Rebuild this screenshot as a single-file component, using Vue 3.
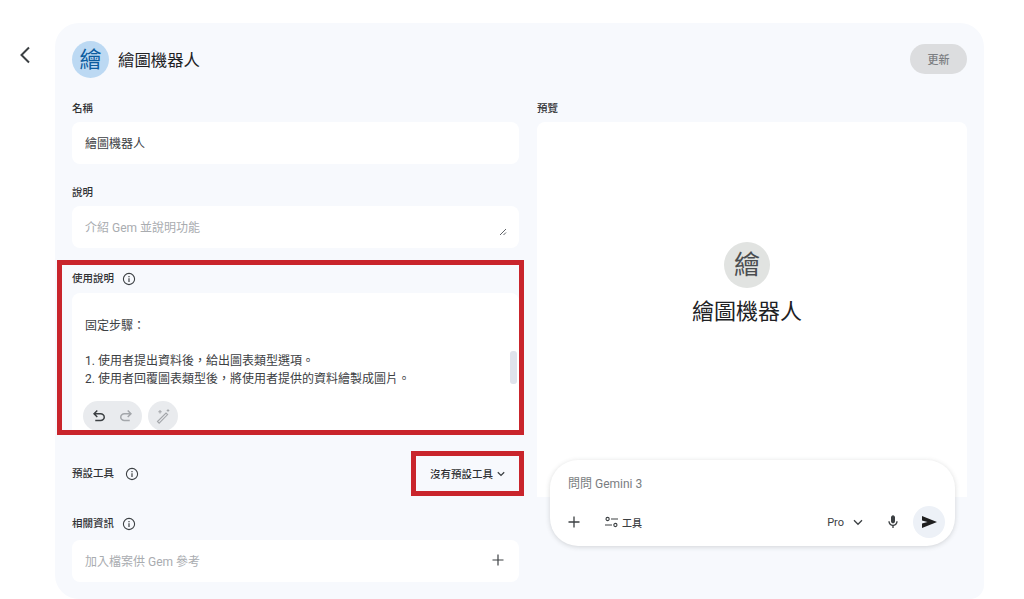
<script setup>
const steps = [
  '1. 使用者提出資料後，給出圖表類型選項。',
  '2. 使用者回覆圖表類型後，將使用者提供的資料繪製成圖片。',
]
</script>

<template>
  <div class="page">
    <div class="back-col">
      <svg class="back" width="12" height="18" viewBox="0 0 12 18" fill="none">
        <path d="M10 1.5 2.5 9l7.5 7.5" stroke="#3c4043" stroke-width="2" />
      </svg>
    </div>
    <main class="panel">
      <header class="head">
        <div class="avatar">繪</div>
        <h1 class="title">繪圖機器人</h1>
        <button class="update">更新</button>
      </header>
      <div class="cols">
        <section class="left">
          <label class="label">名稱</label>
          <div class="input">繪圖機器人</div>

          <label class="label gap">說明</label>
          <div class="input muted">
            介紹 Gem 並說明功能
            <svg class="resize" width="8" height="8" viewBox="0 0 8 8" fill="none">
              <path d="M1 7 7 1M4.5 7 7 4.5" stroke="#5f6368" stroke-width="1" />
            </svg>
          </div>

          <div class="marked">
            <div class="label-row">
              <span class="label">使用說明</span>
              <svg class="info" width="14" height="14" viewBox="0 0 14 14" fill="none">
                <circle cx="7" cy="7" r="5.6" stroke="#3c4043" stroke-width="1.1" />
                <path d="M7 6.3v3.6M7 4v1.2" stroke="#3c4043" stroke-width="1.2" />
              </svg>
            </div>
            <div class="editor">
              <p class="line">固定步驟：</p>
              <p class="line blank"></p>
              <p v-for="s in steps" :key="s" class="line">{{ s }}</p>
              <div class="edit-tools">
                <div class="pill">
                  <svg width="18" height="18" viewBox="0 0 24 24" fill="#3c4043">
                    <path d="M7 19v-2h7.1q1.575 0 2.737-1T18 13.5q0-1.5-1.163-2.5T14.1 10H7.8l2.6 2.6L9 14 4 9l5-5 1.4 1.4L7.8 8h6.3q2.425 0 4.163 1.575T20 13.5q0 2.35-1.738 3.925T14.1 19Z" />
                  </svg>
                  <svg class="flip" width="18" height="18" viewBox="0 0 24 24" fill="#a4a7ab">
                    <path d="M7 19v-2h7.1q1.575 0 2.737-1T18 13.5q0-1.5-1.163-2.5T14.1 10H7.8l2.6 2.6L9 14 4 9l5-5 1.4 1.4L7.8 8h6.3q2.425 0 4.163 1.575T20 13.5q0 2.35-1.738 3.925T14.1 19Z" />
                  </svg>
                </div>
                <div class="round">
                  <svg width="16" height="16" viewBox="0 0 16 16" fill="none">
                    <path d="M2.5 13.5 11 5l1.6 1.6-8.5 8.5z" stroke="#a4a7ab" stroke-width="1.1" />
                    <path d="M5 2v3.4M3.3 3.7h3.4M13 1.2v2.6M11.7 2.5h2.6" stroke="#a4a7ab" stroke-width="1.1" />
                  </svg>
                </div>
              </div>
              <div class="scroll-thumb"></div>
            </div>
          </div>

          <div class="tools-row">
            <div class="label-row">
              <span class="label">預設工具</span>
              <svg class="info wide" width="14" height="14" viewBox="0 0 14 14" fill="none">
                <circle cx="7" cy="7" r="5.6" stroke="#3c4043" stroke-width="1.1" />
                <path d="M7 6.3v3.6M7 4v1.2" stroke="#3c4043" stroke-width="1.2" />
              </svg>
            </div>
            <div class="tool-select">
              <span>沒有預設工具</span>
              <svg width="8" height="6" viewBox="0 0 8 6" fill="none">
                <path d="M.8 1.2 4 4.4l3.2-3.2" stroke="#3c4043" stroke-width="1.3" />
              </svg>
            </div>
          </div>

          <div class="label-row related">
            <span class="label">相關資訊</span>
            <svg class="info" width="14" height="14" viewBox="0 0 14 14" fill="none">
              <circle cx="7" cy="7" r="5.6" stroke="#3c4043" stroke-width="1.1" />
              <path d="M7 6.3v3.6M7 4v1.2" stroke="#3c4043" stroke-width="1.2" />
            </svg>
          </div>
          <div class="input muted file">
            <span>加入檔案供 Gem 參考</span>
            <svg width="12" height="12" viewBox="0 0 12 12" fill="none">
              <path d="M6 .5v11M.5 6h11" stroke="#3c4043" stroke-width="1.2" />
            </svg>
          </div>
        </section>

        <section class="right">
          <label class="label">預覽</label>
          <div class="preview">
            <div class="preview-avatar">繪</div>
            <div class="preview-title">繪圖機器人</div>
          </div>
          <div class="composer">
            <div class="ask">問問 Gemini 3</div>
            <div class="comp-row">
              <svg width="12" height="12" viewBox="0 0 12 12" fill="none">
                <path d="M6 .5v11M.5 6h11" stroke="#3c4043" stroke-width="1.3" />
              </svg>
              <svg class="tune" width="13" height="12" viewBox="0 0 13 12" fill="none">
                <circle cx="2.6" cy="3" r="1.6" stroke="#3c4043" stroke-width="1.1" />
                <circle cx="10.4" cy="9" r="1.6" stroke="#3c4043" stroke-width="1.1" />
                <path d="M6 3h7M0 9h7" stroke="#3c4043" stroke-width="1.1" />
              </svg>
              <span class="tool-word">工具</span>
              <span class="pro">Pro</span>
              <svg class="pro-chev" width="10" height="7" viewBox="0 0 10 7" fill="none">
                <path d="M1 1.3 5 5.3l4-4" stroke="#3c4043" stroke-width="1.3" />
              </svg>
              <svg class="mic" width="16" height="16" viewBox="0 0 24 24" fill="#3c4043">
                <path d="M12 14q-1.25 0-2.125-.875T9 11V5q0-1.25.875-2.125T12 2q1.25 0 2.125.875T15 5v6q0 1.25-.875 2.125T12 14Zm-1 7v-3.075q-2.6-.35-4.3-2.325T5 11h2q0 2.075 1.463 3.538T12 16q2.075 0 3.538-1.463T17 11h2q0 2.625-1.7 4.6T13 17.925V21h-2Z" />
              </svg>
              <div class="send">
                <svg width="15" height="12" viewBox="0 0 15 12" fill="#1f1f1f">
                  <path d="M0 12V7.6L5.5 6 0 4.4V0l15 6z" />
                </svg>
              </div>
            </div>
          </div>
        </section>
      </div>
    </main>
  </div>
</template>

<style>
html, body { margin: 0; background: #fff; overflow: hidden; }
</style>

<style scoped>
.page {
  display: flex;
  width: 1024px;
  height: 599px;
  overflow: hidden;
  font-family: Roboto, "Noto Sans CJK TC", sans-serif;
  color: #1f1f1f;
  background: #fff;
}
.back-col { width: 55px; flex: none; }
.back { display: block; margin: 46px 0 0 19px; }
.panel {
  width: 929px;
  height: 576px;
  margin-top: 23px;
  padding: 18px 17px 17px;
  box-sizing: border-box;
  flex: none;
  background: #f7f9fd;
  border-radius: 24px 24px 14px 24px;
}
.head { display: flex; align-items: center; height: 37px; }
.avatar {
  width: 37px;
  height: 37px;
  border-radius: 50%;
  background: #bcd9f3;
  color: #0b5c9e;
  font-size: 22px;
  line-height: 37px;
  text-align: center;
}
.title {
  margin: 0 0 2px 9px;
  font-size: 16.4px;
  font-weight: 400;
  color: #202124;
}
.update {
  margin: 0 0 2px auto;
  width: 57px;
  height: 30px;
  border: 0;
  border-radius: 15px;
  background: #dcdddf;
  color: #7c7f83;
  font: 500 11px Roboto, "Noto Sans CJK TC", sans-serif;
}
.cols {
  display: grid;
  grid-template-columns: 447px 430px;
  column-gap: 18px;
  margin-top: 24px;
}
.left, .right { display: flex; flex-direction: column; min-width: 0; }
.label {
  display: block;
  height: 14px;
  line-height: 14px;
  font-size: 10.5px;
  font-weight: 500;
  color: #303134;
}
.gap { margin-top: 22px; }
.input {
  position: relative;
  display: flex;
  align-items: center;
  height: 42px;
  margin-top: 6px;
  padding: 0 13px 2px;
  box-sizing: border-box;
  background: #fff;
  border-radius: 8px;
  font-size: 12px;
  color: #3c4043;
}
.muted { color: #a9acb0; }
.resize { position: absolute; right: 12px; bottom: 12px; }
.marked {
  margin: 12px -5px 0 -15px;
  padding: 7px 0 0 10px;
  border: 5px solid #c9252c;
  height: 175px;
  box-sizing: border-box;
  overflow: hidden;
}
.label-row { display: flex; align-items: center; height: 14px; }
.info { margin-left: 8px; }
.info.wide { margin-left: 11px; }
.editor {
  position: relative;
  height: 137px;
  margin-top: 7px;
  padding: 24px 0 0 13px;
  box-sizing: border-box;
  background: #fff;
  border-radius: 8px 8px 0 0;
  overflow: hidden;
}
.line {
  margin: 0;
  height: 18px;
  line-height: 18px;
  font-size: 12px;
  color: #3c4043;
}
.blank { height: 17px; }
.edit-tools { display: flex; gap: 6px; margin: 13px 0 0 -2px; }
.pill {
  display: flex;
  align-items: center;
  justify-content: space-between;
  width: 59px;
  height: 30px;
  padding: 0 7px;
  box-sizing: border-box;
  border-radius: 15px;
  background: #e9ebee;
}
.flip { transform: scaleX(-1); }
.round {
  display: flex;
  align-items: center;
  justify-content: center;
  width: 30px;
  height: 30px;
  border-radius: 50%;
  background: #e9ebee;
}
.scroll-thumb {
  position: absolute;
  right: 2px;
  top: 58px;
  width: 7px;
  height: 33px;
  border-radius: 3px;
  background: #dfe3ec;
}
.tools-row {
  display: flex;
  align-items: center;
  justify-content: space-between;
  margin-top: 16px;
  margin-right: -5px;
  height: 45px;
}
.tool-select {
  display: flex;
  align-items: center;
  gap: 4px;
  width: 113px;
  height: 45px;
  padding-left: 14px;
  box-sizing: border-box;
  border: 5px solid #c9252c;
  font-size: 10.5px;
  font-weight: 500;
  color: #303134;
}
.related { margin-top: 21px; }
.file { margin-top: 9px; justify-content: space-between; padding-right: 15px; }
.preview {
  display: flex;
  flex-direction: column;
  align-items: center;
  height: 375px;
  margin-top: 6px;
  padding: 120px 10px 0 0;
  box-sizing: border-box;
  background: #fff;
  border-radius: 8px 8px 0 0;
}
.preview-avatar {
  width: 46px;
  height: 46px;
  border-radius: 50%;
  background: #e1e3e1;
  color: #4a4d50;
  font-size: 26px;
  line-height: 46px;
  text-align: center;
}
.preview-title {
  margin-top: 8px;
  font-size: 22px;
  line-height: 32px;
  color: #202124;
}
.composer {
  height: 86px;
  margin: -37px 12px 0 13px;
  padding: 15px 10px 8px 18px;
  box-sizing: border-box;
  background: #fff;
  border-radius: 28px;
  box-shadow: 0 1px 5px rgba(60, 64, 67, .2);
}
.ask { height: 18px; line-height: 18px; font-size: 12px; color: #7a7d81; }
.comp-row { display: flex; align-items: center; height: 32px; margin-top: 13px; }
.tune { margin-left: 25px; }
.tool-word { margin-left: 4px; font-size: 10px; font-weight: 500; color: #3c4043; }
.pro { margin-left: auto; font-size: 11px; color: #3c4043; }
.pro-chev { margin-left: 9px; }
.mic { margin-left: 22px; }
.send {
  display: flex;
  align-items: center;
  justify-content: center;
  width: 32px;
  height: 32px;
  margin-left: 12px;
  border-radius: 50%;
  background: #edf1f7;
}
</style>
